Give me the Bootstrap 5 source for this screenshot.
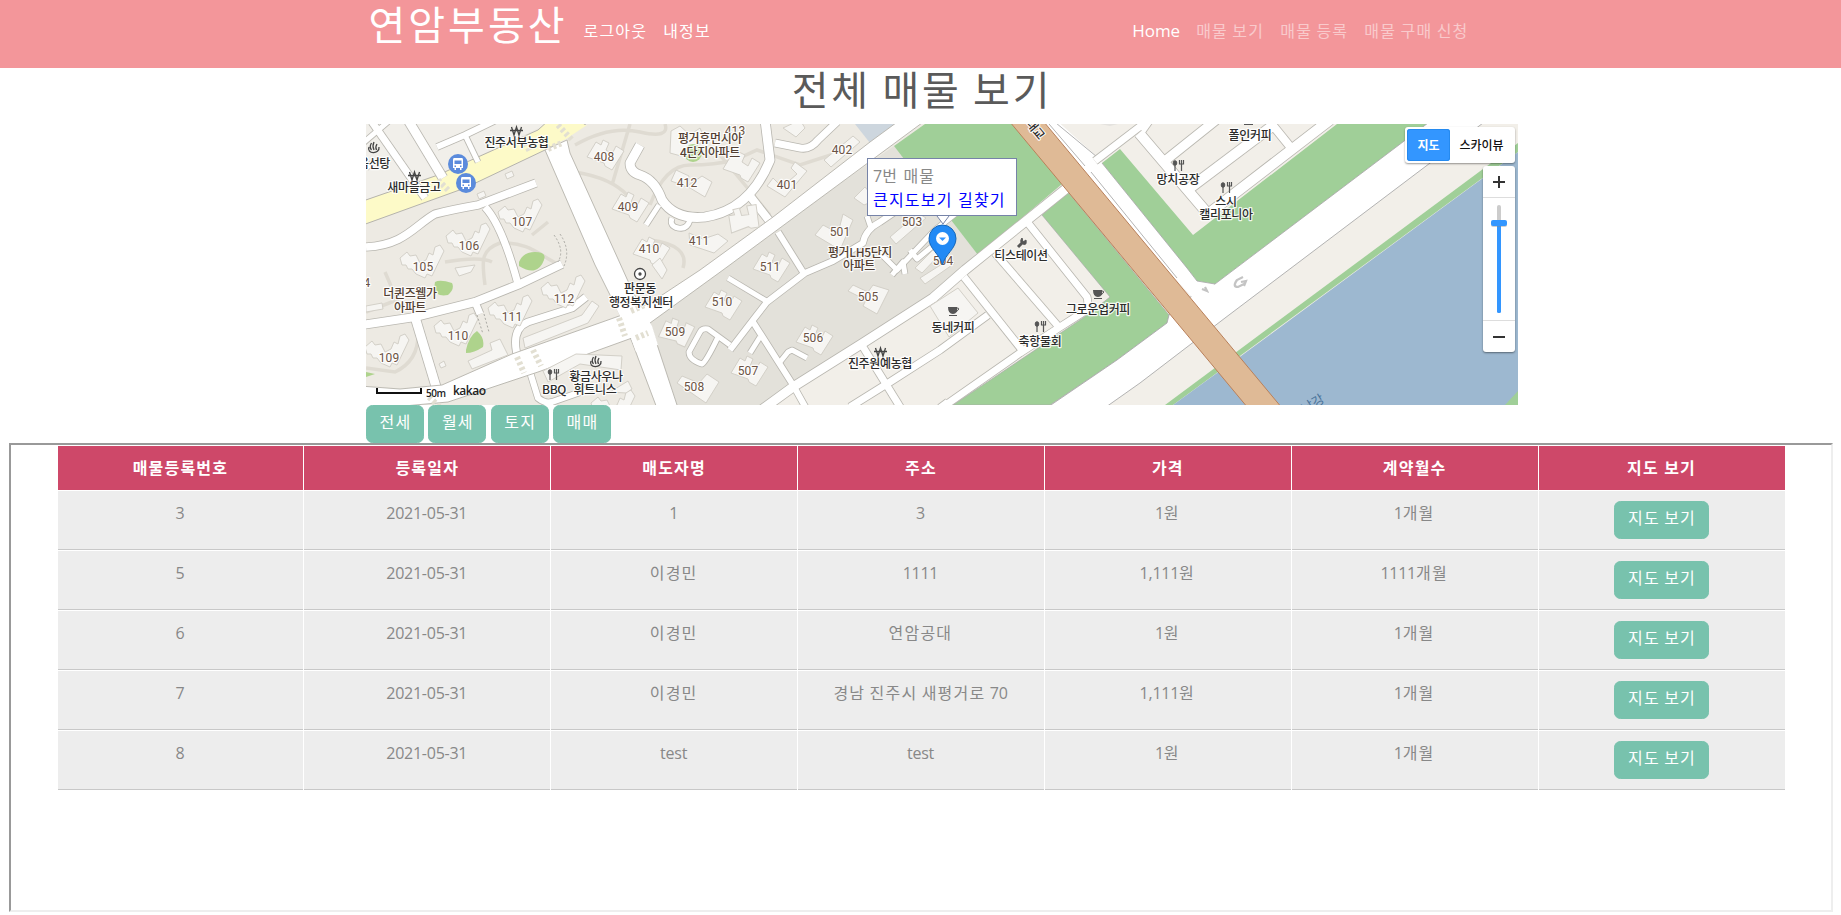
<!DOCTYPE html>
<html lang="ko">
<head>
<meta charset="utf-8">
<meta name="viewport" content="width=device-width, initial-scale=1">
<title>연암부동산</title>
<link href="https://cdn.jsdelivr.net/npm/bootstrap@5.3.0/dist/css/bootstrap.min.css" rel="stylesheet">
<style>
body{font-family:"Open Sans","Noto Sans CJK KR",sans-serif;font-size:16px;line-height:24px;color:#888;background:#fff;overflow:hidden}
.ko{letter-spacing:1.2px;word-spacing:-1px}
.wrap{width:1140px;padding:0 14px 0 15px;margin:0 auto}
.topbar{height:68px;background:#f3969a;padding:0}
.topbar .navbar-brand{font-size:40px;line-height:50px;letter-spacing:3px;padding:0;margin:0 8px 18px 3px;color:#fff}
.topbar .nav-link{padding:0 8px;color:#fff;line-height:24px;margin-top:-6px}
.topbar .home{font-size:17px}
.topbar .dim{color:rgba(255,255,255,.5)}
.pagetitle{height:56px;line-height:44px;font-size:40px;letter-spacing:2.8px;word-spacing:-1.7px;padding-left:3px;color:#5a5a5a;margin:0;font-weight:400}
.mapbox{width:1152px;height:281px;margin-left:366px;overflow:hidden}
.mapbox>svg{display:block}
.btn-mint{--bs-btn-color:#fff;--bs-btn-bg:#78c2ad;--bs-btn-border-color:#78c2ad;--bs-btn-hover-color:#fff;--bs-btn-hover-bg:#66b49f;--bs-btn-border-radius:6.4px;--bs-btn-font-size:16px;letter-spacing:1.2px;word-spacing:-1px;padding:4px 0 8px 1px;line-height:24px}
.filters{padding-left:366px;gap:4.35px}
.filters .btn{width:58px;height:38px}
.frame{width:1824px;height:469px;margin-left:9px;border:2px solid;border-color:#999 #eee #eee #999}
.listing{width:95%;margin:0 auto;border-collapse:separate;border-spacing:1px;table-layout:fixed;text-align:center}
.listing th{background:#ce4869;color:#fff;padding:10px;font-weight:700;height:44px}
.listing td{background:#ededed;border-bottom:1px solid #c8c8c8;padding:10px 11px 10px 10px;vertical-align:top;letter-spacing:-.25px}
.listing td:last-child{padding:10px}
.listing .ko,.listing th{letter-spacing:1.2px}
.listing .btn{width:95px;height:38px;display:block;margin:0 auto}
.info{left:501px;top:34px;width:150px;height:58px;border:1px solid #7683a8;background:#fff;padding:5px 5px;line-height:24px;white-space:nowrap}
.info .ko{word-spacing:0}
.info a{color:#00f;text-decoration:none}
.maptype{left:1039px;top:3px;width:110px;height:36px;padding:2px;border-radius:3px;font:500 12px/32px "Noto Sans CJK KR",sans-serif;color:#111;background:#fff;box-shadow:0 1px 2px rgba(0,0,0,.4)}
.maptype .on{width:43px;background:#3396ff;color:#fff;border-radius:3px;font-weight:700;box-shadow:inset 0 0 0 1px #258aef}
.zoomer{left:1117px;top:42px;width:32px;height:186px;border-radius:3px;background:#fff;box-shadow:0 1px 2px rgba(0,0,0,.45)}
.num{font:400 12px Roboto,sans-serif;fill:#6b5344;letter-spacing:.1px}
.apt,.poi{font:500 12px "Noto Sans CJK KR",sans-serif;letter-spacing:-.35px;fill:#523f33}
.poi{fill:#2b2b2b}
.num,.apt,.poi{text-anchor:middle;paint-order:stroke;stroke:#fff;stroke-width:2.4px;stroke-linejoin:round;stroke-opacity:.85}
</style>
</head>
<body>
<nav class="navbar topbar"><div class="wrap d-flex align-items-center h-100">
  <a class="navbar-brand" href="#">연암부동산</a>
  <a class="nav-link ko" href="#">로그아웃</a><a class="nav-link ko" href="#">내정보</a>
  <div class="d-flex ms-auto">
    <a class="nav-link home" href="#">Home</a><a class="nav-link dim ko" href="#">매물 보기</a><a class="nav-link dim ko" href="#">매물 등록</a><a class="nav-link dim ko" href="#">매물 구매 신청</a>
  </div>
</div></nav>
<h1 class="pagetitle text-center">전체 매물 보기</h1>

<div class="mapbox position-relative">
<svg width="1152" height="281" viewBox="366 124 1152 281" id="map">
  <rect x="366" y="124" width="1152" height="281" fill="#edeae3"/>
  <path fill="#f1efea" d="M366 124H547L438 175 366 200z"/>
  <path fill="#e3e1da" d="M894 146 980 255 940 290 770 405H670L630 325 720 268z"/>
  <path fill="#cdd6de" d="M855 124 870 143 895 124z"/>
  <path fill="#f2efe9" d="M766 407 950 285 1067 187 1012 124H1518V405z"/>
  <path fill="#e4e2de" d="M1100 124h18l-8 2z"/>
  <g id="lots" fill="none" stroke="#dfdbd2" stroke-width="3.500">
    <path d="M575 145Q610 125 640 132T665 124M575 172Q612 178 628 196M630 124 612 185M650 205Q665 165 690 165T735 160L757 150 800 165 840 152M720 155 770 215M385 272 397 300 366 312M485 285C482 262 480 250 500 243 530 242 540 256 560 265M532 235 548 222M445 262Q480 256 492 262M418 330Q420 360 395 372L366 368M650 240Q690 245 683 268"/>
  </g>
  <g fill="#a0cf98">
    <path d="M894 146 925 124H1012L1062 184 978 255z"/>
    <path stroke="#aaa" stroke-width=".7" d="M1042 215 1068 192 1169 315 1167 323 1117 360 1050 405H953L1083 318 1110 297z"/>
    <path d="M1102 163 1120 149 1193 235 1337 124H1427L1215 284 1197 281z"/>
  </g>
  <path fill="#fff" stroke="#aaa" stroke-width=".9" d="M1048 407 1117 360 1167 323 1169 315 1185 300 1215 284 1428 123H1483L1225 318 1140 383 1106 407z"/>
  <path fill="#fff" d="M1040 118H1054L1097 157 1102 163 1187 268 1197 281 1215 284 1200 306 1160 262z"/>
  <path fill="none" stroke="#aaa" stroke-width=".9" d="M1102 163 1187 268 1197 281 1215 284M1056 123 1097 157 1140 123M1049 124 1085 166M1091 172 1177 278"/>
  <path fill="#a0cf98" d="M1165 405 1518 143V152L1173 405z"/>
  <path fill="#9db8d0" d="M1173 405 1217 373 1241 356 1483 178 1518 152V405z"/>
  <path fill="#a0cf98" d="M1505 405 1518 391V405z"/>
  <path fill="#fdfac8" stroke="#b5b3ac" d="M360 202 438 175 538 130 549 120H592L545 150 465 188 360 226z"/>
  <g id="roads" fill="none" stroke-linejoin="round"></g>
  <path fill="#fff" stroke="#b5b3ac" stroke-width=".9" d="M545 150 567 140 570 153 623 270 632 290 651 326 679 411H658L632 342 620 315 595 265z"/>
  <path id="mainroad" fill="#fff" stroke="#b5b3ac" stroke-width=".9" d="M900 120 870 142 773 217 700 270 650 303 622 315 512 354 442 385 400 389 360 386V410L448 402 538 372 632 338 650 323 723 270 926 120z"/>
  <path fill="#fff" d="M612 300 631 291 652 326 658 345 636 352 631 338 619 314z"/>
  <path fill="#fdfac8" d="M538 131 549 125H587L566 139 545 149z"/>
  <g stroke="#e2dfd2" stroke-width="6" stroke-dasharray="3 2.6" fill="none">
    <path d="M619 318 625 336M631 311 647 304M636 338 648 333M517 357 524 373M533 350 541 366M558 125 572 140M438 180 448 190M523 138 530 152M429 397 443 410M548 149 562 143"/>
  </g>
  <g id="blds" fill="#f6f5f2" stroke="#d3d0c8" stroke-width="1"></g>
  <g fill="#aed38c"><path d="M519 262Q523 252 535 252T544 260 535 270 519 266zM435 282Q440 279 452 283 455 289 448 295 436 297 434 289zM466 350Q469 336 477 331 485 338 483 347 474 353 466 353zM366 372 375 374 366 377z"/><circle cx="693" cy="153" r="9"/></g>
  <path fill="none" stroke="#aaa9a3" stroke-dasharray="2 2" d="M554 235Q565 250 558 262M560 234Q571 250 564 266M477 315 483 334M484 314 489 332"/>
  <path fill="#dfba96" stroke="#b9805a" d="M1010 122H1044L1282 408H1248z"/>
  <path fill="none" stroke="#c4c4c4" stroke-width="2.2" d="M1243 277 1237 280Q1232 287 1238 287L1244 284M1241 282 1246 281 1244 286M1202 289 1207 291 1205 287"/>
  <g id="labels"></g>
  <g fill="#5b8bdc"><circle cx="458" cy="164" r="10"/><circle cx="466" cy="183" r="10"/></g>
  <g id="bus"><path fill="#fff" d="M454 158H462Q463 158 463 160V168H461.500V170H460V168H456V170H454.500V168H453V160Q453 158 454 158z"/><path fill="#5b8bdc" d="M454.500 160.500H461.500V164H454.500zM454.500 165.500H456V167H454.500zM460 165.500H461.500V167H460z"/></g>
  <use href="#bus" x="8" y="19"/>
  <g fill="none" stroke="#444" stroke-width="1.300">
    <g id="onsen"><path d="M369 147C366 154 380 155 379 147M371.500 150Q369 147 371.500 143M374 150Q372 146 374 142M376.500 150Q375 147 377 144"/></g>
    <use href="#onsen" x="222" y="214"/>
    <circle cx="640" cy="274" r="5.500" fill="#fff"/><circle cx="640" cy="274" r="1"/>
    <g id="won"><path d="M511.500 127 514 135 516.500 127 519 135 521.500 127M510 130.500H523"/></g>
    <use href="#won" x="-102" y="45"/><use href="#won" x="364" y="221"/>
  </g>
  <g fill="#555" stroke="#555">
    <g id="fork"><ellipse cx="1175" cy="163" rx="1.800" ry="2.300"/><path fill="none" stroke-width="1.2" d="M1175 163V171M1179.500 160V164H1183.500V160M1181.500 160V171"/></g>
    <use href="#fork" x="48" y="22"/><use href="#fork" x="-138" y="161"/><use href="#fork" x="-625" y="209"/>
    <g id="cup" stroke="none"><path d="M948 307H957Q958 314 953 314 948 314 948 307zM949 315H957V316H949z"/><path d="M957 308Q961 308 956 312" fill="none" stroke="#555"/></g>
    <use href="#cup" x="145" y="-17"/>
    <path d="M1244 124H1253" stroke-width="2"/>
    <path d="M1018 247 1023 242" stroke-width="3"/><path d="M1022 238Q1019 242 1023 244T1026 240L1023 242z"/>
  </g>
  <path d="M377 388V393H421V388" fill="none" stroke="#111" stroke-width="2"/>
  <text x="426" y="397" font-family="Open Sans" font-size="10" font-weight="600" fill="#222" textLength="20">50m</text>
  <text x="453" y="395" font-family="Open Sans" font-size="12" font-weight="600" fill="#222" textLength="33">kakao</text>
  <path fill="#fff" stroke="#7683a8" d="M937 216 943 224 949 216"/>
  <path fill="#228af5" stroke="#1767b8" d="M942.500 265C940 254 929 249 929 238.500A13.500 13.500 0 0 1 956 238.500C956 249 945 254 942.500 265z"/>
  <circle cx="942.500" cy="238.500" r="6.500" fill="#fff"/><path fill="#3396ff" d="M939 237.500H946L942.500 241z"/>
</svg>
<div class="info position-absolute"><div>7<span class="ko">번 매물</span></div><div class="ko"><a href="#">큰지도보기</a> <a href="#">길찾기</a></div></div>
<div class="maptype position-absolute d-flex text-center"><div class="on">지도</div><div class="flex-fill">스카이뷰</div></div>
<div class="zoomer position-absolute"><svg class="d-block" width="32" height="186"><path d="M0 31.500H32M0 154.500H32" stroke="#ddd"/><path d="M10 16H22M16 10V22M10 171H22" stroke="#333" stroke-width="2"/><rect x="14" y="39" width="4" height="20" rx="2" fill="#ccc"/><rect x="14" y="57" width="4" height="90" rx="1.500" fill="#3396ff"/><rect x="8" y="55" width="16" height="6" rx="2" fill="#888" opacity=".4"/><rect x="8" y="54" width="16" height="6" rx="2" fill="#3396ff"/></svg></div>
</div>

<div class="filters d-flex"><button class="btn btn-mint">전세</button><button class="btn btn-mint">월세</button><button class="btn btn-mint">토지</button><button class="btn btn-mint">매매</button></div>

<div class="frame">
<table class="listing">
<thead><tr><th>매물등록번호</th><th>등록일자</th><th>매도자명</th><th>주소</th><th>가격</th><th>계약월수</th><th>지도 보기</th></tr></thead>
<tbody>
<tr><td>3</td><td>2021-05-31</td><td>1</td><td>3</td><td>1<span class="ko">원</span></td><td>1<span class="ko">개월</span></td><td><button class="btn btn-mint">지도 보기</button></td></tr>
<tr><td>5</td><td>2021-05-31</td><td class="ko">이경민</td><td>1111</td><td>1,111<span class="ko">원</span></td><td>1111<span class="ko">개월</span></td><td><button class="btn btn-mint">지도 보기</button></td></tr>
<tr><td>6</td><td>2021-05-31</td><td class="ko">이경민</td><td class="ko">연암공대</td><td>1<span class="ko">원</span></td><td>1<span class="ko">개월</span></td><td><button class="btn btn-mint">지도 보기</button></td></tr>
<tr><td>7</td><td>2021-05-31</td><td class="ko">이경민</td><td><span class="ko">경남 진주시 새평거로 </span>70</td><td>1,111<span class="ko">원</span></td><td>1<span class="ko">개월</span></td><td><button class="btn btn-mint">지도 보기</button></td></tr>
<tr><td>8</td><td>2021-05-31</td><td>test</td><td>test</td><td>1<span class="ko">원</span></td><td>1<span class="ko">개월</span></td><td><button class="btn btn-mint">지도 보기</button></td></tr>
</tbody></table>
</div>

<script src="https://cdn.jsdelivr.net/npm/bootstrap@5.3.0/dist/js/bootstrap.bundle.min.js"></script>
<script>
const NS='http://www.w3.org/2000/svg';
function add(parent,tag,attrs,text){const e=document.createElementNS(NS,tag);for(const k in attrs)e.setAttribute(k,attrs[k]);if(text)e.textContent=text;document.getElementById(parent).appendChild(e);}
// [width, path] of each minor road; casings go below all the fills
const roads=[
[5,'M362 144 390 120'],[7,'M372 122 425 198'],[9,'M408 120 443 178'],[6,'M437 147 465 135 496 120'],[5,'M465 135 478 162'],[5,'M366 168 372 163'],
[7.5,'M536 183 478 205Q450 210 435 214C415 225 405 245 366 247'],[7,'M485 207Q502 225 518 284'],
[8,'M362 325 415 317 475 302 520 284 562 264'],[9,'M415 317 437 390'],[7,'M475 302 480 314'],
[7,'M586 297 572 308 528 322Q508 330 520 365'],[6,'M530 372 538 398Q545 404 552 402L592 388'],
[9,'M640 145 630 163Q630 172 640 175 655 180 662 200 675 220 705 217 750 210 770 160L765 120'],
[7,'M775 143 800 148Q810 150 818 140L837 122'],[8,'M750 196 771 223'],[5,'M690 220Q687 230 678 228T672 218'],[5,'M646 225 659 205'],
[6,'M778 232 803 272'],[6,'M730 350 753 320 767 302 805 273 833 261 863 243Q865 230 880 222L905 205'],[5,'M867 216 871 228'],
[5,'M880 253 897 270 935 230 960 210'],[5,'M910 250 917 259 945 236'],[5,'M892 275 903 262 905 274'],
[5,'M728 278 768 302'],[5,'M730 345 708 329Q702 328 700 332L689 352Q689 360 702 364 706 362 718 337'],
[6,'M753 322 793 385 807 410'],[5,'M760 337 750 353'],[5,'M780 362 788 352 792 350 807 358'],
[9,'M760 411 793 387 863 343 933 298 965 270 1067 188'],
[7,'M850 407 890 382 940 350 988 315'],[7,'M863 347 902 410'],[7,'M940 408 948 402'],
[7,'M964 277 1022 350'],[7,'M995 253 1058 326'],
[7,'M940 409 1020 353 1060 327 1082 313Q1090 308 1087 297L1028 223'],
[7,'M1095 161 1142 125'],[10,'M1139 133 1208 214 1330 120'],[10,'M1141 130 1148 120'],[9,'M1166 160 1216 120'],[10,'M1190 188 1275 124'],[8,'M1262 112 1292 149']];
for(const [w,d] of roads)add('roads','path',{d,stroke:'#b9b7b0','stroke-width':w+1.6});
for(const [w,d] of roads)add('roads','path',{d,stroke:'#fff','stroke-width':w});
// tower blocks: fan shapes on the west side, stepped shapes elsewhere
const fans=[[522,219],[470,243],[424,265],[458,333],[512,315],[565,295],[389,354],[615,410]];
for(const [x,y] of fans)add('blds','path',{transform:`translate(${x} ${y})`,d:'M-24-7-17-13-14-9-8-10-4-2 2-5 5-12 9-10 11-18 16-20 20-14 8 11 3 9 1 13-8 9-12 4-16 4-18 0-22 0z'});
const steps=[[604,153,0],[629,205,0],[650,250,0],[722,303,0],[675,331,-6],[748,369,0],[813,338,0],[740,165,0],[742,219,-40],[770,265,0]];
for(const [x,y,r] of steps)add('blds','path',{transform:`translate(${x} ${y}) rotate(${r})`,d:'M-17 4-8-11-3-8-1-13 5-10 2-3 8 1 12-7 20-2 8 17 1 13 0 10z'});
['M824 160 853 136 860 142 831 167z','M767 186 773 178 782 187 797 174 791 168 795 162 807 171 785 197z','M676 170 689 176 686 187 702 176 712 182 705 197 690 188 671 181z','M689 233 703 239 718 234 728 241 714 253 690 245z',
'M815 235 823 225 838 233 843 214 853 220 840 250z','M890 237 918 213 926 218 896 244z','M848 291 853 285 868 292 873 285 889 290 877 314 863 306 866 300z','M677 383 682 376 699 383 707 374 719 382 706 403z',
'M854 198 865 187 876 200 864 205z','M920 278 950 259 955 263 925 284z','M523 338 582 315 592 301 599 306 588 323 525 348z','M468 361 492 350 490 343 500 339 508 355 472 369z','M455 268 475 265 471 272 459 276z',
'M543 371 576 354 622 356 621 370 580 364 548 382z','M477 194 484 191 486 196 479 199z','M505 174 512 171 514 176 507 179z','M439 364 444 361 446 366 441 368z','M671 131 680 126 690 135 700 128 705 140 681 156 670 153z','M783 128 800 120 805 128 796 137z','M366 306 382 303 383 309 366 312z','M930 306 958 288 978 313 949 337z','M610 392 628 381 632 389 626 393z','M660 258 667 270 662 279 652 265z','M915 268 938 245 944 250 922 273z'
].forEach(d=>add('blds','path',{d}));
const nums=[[408,604,157],[409,628,207],[107,522,222],[106,469,246],[105,423,267],[410,649,249],[412,687,183],[401,787,185],[402,842,150],[413,735,131],[411,699,241],[501,840,232],[503,912,222],[511,770,267],[510,722,302],[509,675,332],[505,868,297],[506,813,338],[507,748,371],[508,694,387],[112,564,299],[111,512,317],[110,458,336],[109,389,358],[504,943,261],[4,367,283]];
for(const [t,x,y] of nums)add('labels','text',{class:'num',x,y:y+4},String(t));
const apts=[['평거휴먼시아',710,138],['4단지아파트',710,152],['평거LH5단지',860,252],['아파트',859,265],['더퀸즈웰가',410,293],['아파트',410,307]];
for(const [t,x,y] of apts)add('labels','text',{class:'apt',x,y:y+4.5},t);
const pois=[['진주서부농협',516.500,142],['새마을금고',414,187],['음선탕',374,163],['판문동',640,288],['행정복지센터',641,302],['황금사우나',596,376],['휘트니스',595,389.500],['BBQ',554,389],['진주원예농협',880,363],['티스테이션',1021,255],['그로운업커피',1098,309],['축항물회',1040,341],['동네커피',953,327],['망치공장',1178,179],['폴인커피',1250,135],['스시',1226,201],['캘리포니아',1226,214]];
for(const [t,x,y] of pois)add('labels','text',{class:'poi',x,y:y+4.5},t);
add('labels','text',{class:'poi',transform:'translate(1032 132) rotate(50)'},'대교');
add('labels','text',{transform:'translate(1305 414) rotate(-32)','font-size':13,'font-family':'Noto Sans CJK KR',fill:'#49739a'},'남강');
</script>
</body>
</html>
